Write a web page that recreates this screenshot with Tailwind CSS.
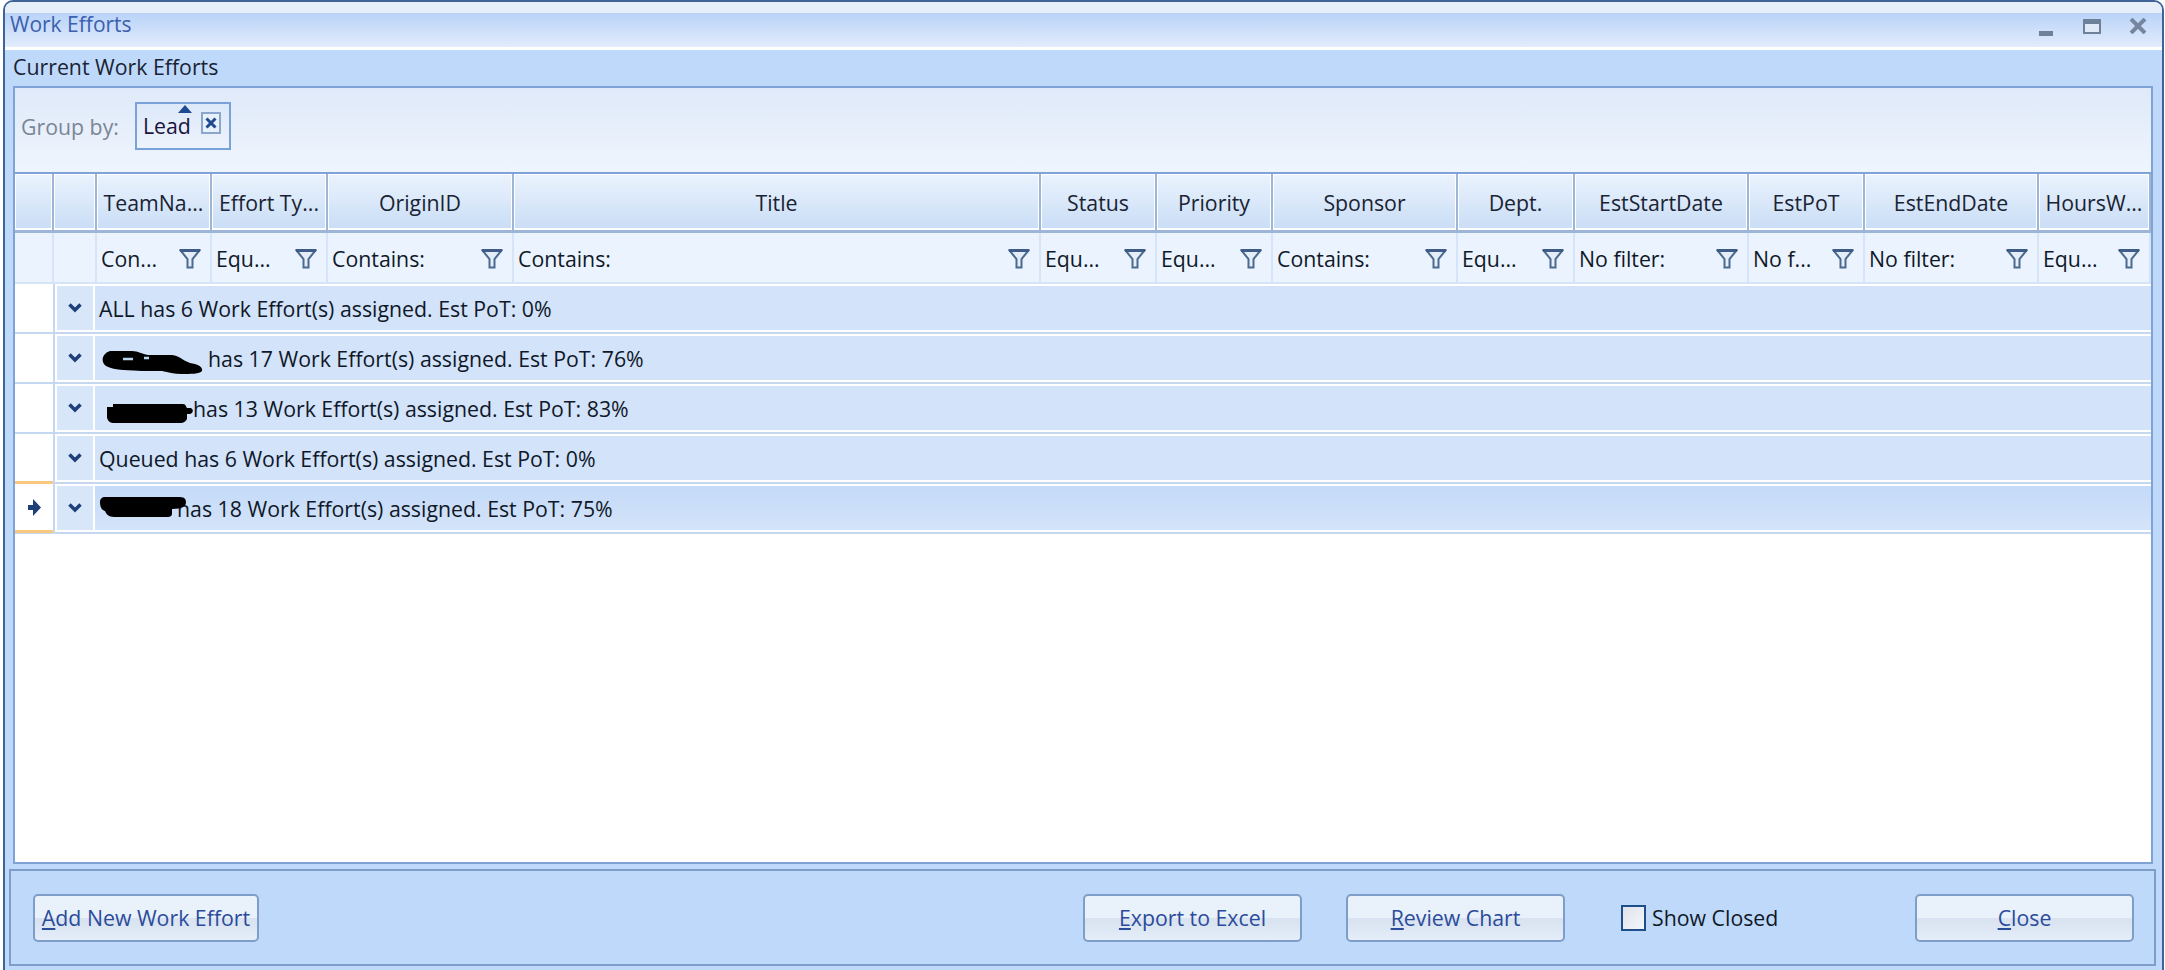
<!DOCTYPE html>
<html><head><meta charset="utf-8"><script src="https://cdn.jsdelivr.net/npm/@tailwindcss/browser@4"></script></head>
<body class="m-0 bg-white">
<div class="w-[2165px] h-[970px] overflow-hidden bg-white font-['Open_Sans',sans-serif] text-[21.3px] text-[#101828]">
<div class="ml-[3px] w-[2161px] h-[970px] flex flex-col border-l-[2px] border-r-[2px] border-t-[2px] border-[#3f6396] rounded-t-[10px] bg-[#bfd9fb] overflow-hidden">
  <!-- Title bar -->
  <div class="h-[48px] shrink-0 border-b-[3px] border-white bg-[linear-gradient(#e6eefa_0,#e6eefa_24%,#b9d3f8_25%,#e2ecfb_100%)] flex items-start pl-[5px] pr-[15px]">
    <span class="self-center text-[#3c5fae] text-[21px] mt-[1px]">Work Efforts</span>
    <span class="ml-auto mt-[29px] w-[14px] h-[5px] bg-[#6f8099]"></span>
    <span class="ml-[30px] mt-[17px] w-[18px] h-[15px] border-[2px] border-t-[5px] border-[#6f8099] bg-[#dfe9f8]"></span>
    <svg class="ml-[28px] mt-[16px]" width="18" height="16" viewBox="0 0 18 16"><path d="M2 1 L16 15 M16 1 L2 15" stroke="#75869e" stroke-width="4"/></svg>
  </div>
  <!-- Body -->
  <div class="flex-1 flex flex-col min-h-0">
    <div class="h-[36px] shrink-0 pl-[8px] pb-[2px] flex items-center text-[#1a2333]">Current Work Efforts</div>
    <!-- Grid outer -->
    <div class="ml-[8px] w-[2140px] h-[778px] shrink-0 border-[2px] border-[#7fa3d6] bg-white flex flex-col">
      <!-- group panel -->
      <div class="h-[84px] shrink-0 bg-[linear-gradient(#dfe9f9,#eff5fd)] flex items-center pl-[6px] pb-[6px]">
        <span class="text-[#7b8594]">Group by:</span>
        <div class="ml-[16px] mt-[-2px] relative w-[96px] h-[48px] border-[2px] border-[#7aa2da] bg-[linear-gradient(#dde8f8,#edf3fc)] flex items-center pl-[6px] text-[#1a1440]">
          Lead
          <svg class="absolute left-[41px] top-[1px]" width="14" height="8" viewBox="0 0 14 8"><path d="M7 0 L14 8 L0 8Z" fill="#1e4a92"/></svg>
          <span class="absolute left-[64px] top-[8px] w-[20px] h-[22px] border-[2px] border-[#8ba6cd] bg-[#e8f0fb] flex items-center justify-center">
            <svg width="12" height="12" viewBox="0 0 12 12"><path d="M1.5 1.5 L10.5 10.5 M10.5 1.5 L1.5 10.5" stroke="#1e4a92" stroke-width="3"/></svg>
          </span>
        </div>
      </div>
      <!-- header -->
      <div class="flex h-[61px] shrink-0 border-t-[2px] border-b-[3px] border-t-[#7fa3d6] border-b-[#9db5d6] text-center text-[#1a2333] [&>div]:shadow-[inset_1px_1px_0_white,inset_-1px_-2px_0_white] [&>div]:flex [&>div]:items-center [&>div]:justify-center [&>div]:whitespace-nowrap [&>div]:overflow-hidden [&>div]:border-r-2 [&>div]:border-r-[#9db5d6] [&>div]:pt-[2px] [&>div]:bg-[linear-gradient(#eaf3fd,#c9ddf6)]">
        <div class="w-[39px]"></div>
        <div class="w-[43px]"></div>
        <div class="w-[115px]">TeamNa...</div>
        <div class="w-[116px]">Effort Ty...</div>
        <div class="w-[186px]">OriginID</div>
        <div class="w-[527px]">Title</div>
        <div class="w-[116px]">Status</div>
        <div class="w-[116px]">Priority</div>
        <div class="w-[185px]">Sponsor</div>
        <div class="w-[117px]">Dept.</div>
        <div class="w-[174px]">EstStartDate</div>
        <div class="w-[116px]">EstPoT</div>
        <div class="w-[174px]">EstEndDate</div>
        <div class="w-[112px]">HoursW...</div>
      </div>
      <!-- filter row -->
      <div class="flex h-[51px] shrink-0 border-b-[2px] border-[#d5e4f7] bg-[#ebf4fe] [&>div]:border-r-2 [&>div]:border-[#d5e4f7] [&>div]:flex [&>div]:items-center [&>div]:justify-between [&>div]:pl-[4px] [&>div]:pr-[9px] [&>div]:pt-[2px] [&>div]:whitespace-nowrap">
        <div class="w-[39px]"></div>
        <div class="w-[43px]"></div>
        <div class="w-[115px]"><span>Con...</span><svg width="22" height="20" viewBox="0 0 22 20"><path d="M1.5 1.5 H20.5 L13.5 10 V18.5 H8.5 V10 Z" fill="#e4edf8" stroke="#4a6a90" stroke-width="2"/><path d="M1 1.5 H21" stroke="#3e5c86" stroke-width="3"/></svg></div>
        <div class="w-[116px]"><span>Equ...</span><svg width="22" height="20" viewBox="0 0 22 20"><path d="M1.5 1.5 H20.5 L13.5 10 V18.5 H8.5 V10 Z" fill="#e4edf8" stroke="#4a6a90" stroke-width="2"/><path d="M1 1.5 H21" stroke="#3e5c86" stroke-width="3"/></svg></div>
        <div class="w-[186px]"><span>Contains:</span><svg width="22" height="20" viewBox="0 0 22 20"><path d="M1.5 1.5 H20.5 L13.5 10 V18.5 H8.5 V10 Z" fill="#e4edf8" stroke="#4a6a90" stroke-width="2"/><path d="M1 1.5 H21" stroke="#3e5c86" stroke-width="3"/></svg></div>
        <div class="w-[527px]"><span>Contains:</span><svg width="22" height="20" viewBox="0 0 22 20"><path d="M1.5 1.5 H20.5 L13.5 10 V18.5 H8.5 V10 Z" fill="#e4edf8" stroke="#4a6a90" stroke-width="2"/><path d="M1 1.5 H21" stroke="#3e5c86" stroke-width="3"/></svg></div>
        <div class="w-[116px]"><span>Equ...</span><svg width="22" height="20" viewBox="0 0 22 20"><path d="M1.5 1.5 H20.5 L13.5 10 V18.5 H8.5 V10 Z" fill="#e4edf8" stroke="#4a6a90" stroke-width="2"/><path d="M1 1.5 H21" stroke="#3e5c86" stroke-width="3"/></svg></div>
        <div class="w-[116px]"><span>Equ...</span><svg width="22" height="20" viewBox="0 0 22 20"><path d="M1.5 1.5 H20.5 L13.5 10 V18.5 H8.5 V10 Z" fill="#e4edf8" stroke="#4a6a90" stroke-width="2"/><path d="M1 1.5 H21" stroke="#3e5c86" stroke-width="3"/></svg></div>
        <div class="w-[185px]"><span>Contains:</span><svg width="22" height="20" viewBox="0 0 22 20"><path d="M1.5 1.5 H20.5 L13.5 10 V18.5 H8.5 V10 Z" fill="#e4edf8" stroke="#4a6a90" stroke-width="2"/><path d="M1 1.5 H21" stroke="#3e5c86" stroke-width="3"/></svg></div>
        <div class="w-[117px]"><span>Equ...</span><svg width="22" height="20" viewBox="0 0 22 20"><path d="M1.5 1.5 H20.5 L13.5 10 V18.5 H8.5 V10 Z" fill="#e4edf8" stroke="#4a6a90" stroke-width="2"/><path d="M1 1.5 H21" stroke="#3e5c86" stroke-width="3"/></svg></div>
        <div class="w-[174px]"><span>No filter:</span><svg width="22" height="20" viewBox="0 0 22 20"><path d="M1.5 1.5 H20.5 L13.5 10 V18.5 H8.5 V10 Z" fill="#e4edf8" stroke="#4a6a90" stroke-width="2"/><path d="M1 1.5 H21" stroke="#3e5c86" stroke-width="3"/></svg></div>
        <div class="w-[116px]"><span>No f...</span><svg width="22" height="20" viewBox="0 0 22 20"><path d="M1.5 1.5 H20.5 L13.5 10 V18.5 H8.5 V10 Z" fill="#e4edf8" stroke="#4a6a90" stroke-width="2"/><path d="M1 1.5 H21" stroke="#3e5c86" stroke-width="3"/></svg></div>
        <div class="w-[174px]"><span>No filter:</span><svg width="22" height="20" viewBox="0 0 22 20"><path d="M1.5 1.5 H20.5 L13.5 10 V18.5 H8.5 V10 Z" fill="#e4edf8" stroke="#4a6a90" stroke-width="2"/><path d="M1 1.5 H21" stroke="#3e5c86" stroke-width="3"/></svg></div>
        <div class="w-[112px]"><span>Equ...</span><svg width="22" height="20" viewBox="0 0 22 20"><path d="M1.5 1.5 H20.5 L13.5 10 V18.5 H8.5 V10 Z" fill="#e4edf8" stroke="#4a6a90" stroke-width="2"/><path d="M1 1.5 H21" stroke="#3e5c86" stroke-width="3"/></svg></div>
      </div>
      <!-- rows -->
      <div class="flex h-[50px] shrink-0 border-b-[2px] border-[#c6d8ef]">
        <div class="w-[40px] border-r-2 border-[#c6d8ef]"></div>
        <div class="my-[2px] ml-[2px] w-[36px] bg-[#d8e6f9] flex items-center justify-center"><svg width="14" height="10" viewBox="0 0 14 10"><path d="M1.5 1.5 L7 7 L12.5 1.5" fill="none" stroke="#1e3f78" stroke-width="3.5"/></svg></div>
        <div class="my-[2px] ml-[2px] flex-1 bg-[#d2e3fa] flex items-center pl-[4px] pt-[2px]">ALL has 6 Work Effort(s) assigned. Est PoT: 0%</div>
      </div>
      <div class="flex h-[50px] shrink-0 border-b-[2px] border-[#c6d8ef]">
        <div class="w-[40px] border-r-2 border-[#c6d8ef]"></div>
        <div class="my-[2px] ml-[2px] w-[36px] bg-[#d8e6f9] flex items-center justify-center"><svg width="14" height="10" viewBox="0 0 14 10"><path d="M1.5 1.5 L7 7 L12.5 1.5" fill="none" stroke="#1e3f78" stroke-width="3.5"/></svg></div>
        <div class="relative my-[2px] ml-[2px] flex-1 bg-[#d2e3fa] flex items-center pl-[113px] pt-[2px]">has 17 Work Effort(s) assigned. Est PoT: 76%
          <svg class="absolute left-[7px] top-[15px]" width="101" height="23" viewBox="0 0 101 23"><path d="M8 0 H30 C36 0 40 3 46 4 H70 C78 5 80 9 88 12 C96 13 101 16 100 20 C98 23 88 23 80 23 C72 23 66 21 60 20 H40 C30 19 12 20 4 15 C-1 12 -1 3 8 0Z" fill="#000"/><path d="M21 8 H31 M42 7 H47" stroke="#b9d3f0" stroke-width="2.5"/></svg>
        </div>
      </div>
      <div class="flex h-[50px] shrink-0 border-b-[2px] border-[#c6d8ef]">
        <div class="w-[40px] border-r-2 border-[#c6d8ef]"></div>
        <div class="my-[2px] ml-[2px] w-[36px] bg-[#d8e6f9] flex items-center justify-center"><svg width="14" height="10" viewBox="0 0 14 10"><path d="M1.5 1.5 L7 7 L12.5 1.5" fill="none" stroke="#1e3f78" stroke-width="3.5"/></svg></div>
        <div class="relative my-[2px] ml-[2px] flex-1 bg-[#d2e3fa] flex items-center pl-[98px] pt-[2px]">has 13 Work Effort(s) assigned. Est PoT: 83%
          <svg class="absolute left-[12px] top-[18px]" width="86" height="19" viewBox="0 0 86 19"><path d="M0 3 H6 V0 H76 C79 0 79 3 80 4 H84 C87 6 86 9 83 10 H80 V15 C78 19 75 19 72 19 H6 C3 19 0 16 0 13Z" fill="#000"/></svg>
        </div>
      </div>
      <div class="flex h-[50px] shrink-0 border-b-[2px] border-[#c6d8ef]">
        <div class="w-[40px] border-r-2 border-[#c6d8ef]"></div>
        <div class="my-[2px] ml-[2px] w-[36px] bg-[#d8e6f9] flex items-center justify-center"><svg width="14" height="10" viewBox="0 0 14 10"><path d="M1.5 1.5 L7 7 L12.5 1.5" fill="none" stroke="#1e3f78" stroke-width="3.5"/></svg></div>
        <div class="my-[2px] ml-[2px] flex-1 bg-[#d2e3fa] flex items-center pl-[4px] pt-[2px]">Queued has 6 Work Effort(s) assigned. Est PoT: 0%</div>
      </div>
      <div class="relative flex h-[50px] shrink-0 border-b-[2px] border-[#c6d8ef]">
        <div class="w-[40px] border-r-2 border-[#c6d8ef]"></div>
        <div class="absolute left-0 top-[-3px] w-[38px] h-[52px] border-y-[3px] border-t-[#f9c87f] border-b-[#f9c87f] flex items-center justify-center bg-white">
          <svg width="13" height="17" viewBox="0 0 13 17"><path d="M0 6 H5 V0 L13 8.5 L5 17 V11 H0Z" fill="#1e3f78"/></svg>
        </div>
        <div class="my-[2px] ml-[2px] w-[36px] bg-[#d8e6f9] flex items-center justify-center"><svg width="14" height="10" viewBox="0 0 14 10"><path d="M1.5 1.5 L7 7 L12.5 1.5" fill="none" stroke="#1e3f78" stroke-width="3.5"/></svg></div>
        <div class="relative my-[2px] ml-[2px] flex-1 bg-[linear-gradient(#c4daf8,#d4e4fa)] flex items-center pl-[82px] pt-[2px]">has 18 Work Effort(s) assigned. Est PoT: 75%
          <svg class="absolute left-[5px] top-[11px]" width="86" height="20" viewBox="0 0 86 20"><path d="M5 0 H80 C85 0 86 3 86 5 C86 9 83 12 72 12 V17 C72 19 70 20 68 20 H14 C9 20 6 17 5 14 C1 13 0 9 0 5 C0 2 2 0 5 0Z" fill="#000"/></svg>
        </div>
      </div>
      <div class="flex-1 bg-white"></div>
    </div>
    <!-- Footer -->
    <div class="mt-[5px] ml-[4px] w-[2147px] h-[97px] shrink-0 border-[2px] border-[#7f9dc9] flex items-center pl-[22px] text-[#2b4b9b]">
      <button class="w-[226px] h-[48px] rounded-[5px] border-[2px] border-[#7f9dc9] bg-[linear-gradient(#e9f1fb_50%,#d8e2f0_50%,#e4edf9)] text-center whitespace-nowrap"><u>A</u>dd New Work Effort</button>
      <button class="ml-[824px] w-[219px] h-[48px] rounded-[5px] border-[2px] border-[#7f9dc9] bg-[linear-gradient(#e9f1fb_50%,#d8e2f0_50%,#e4edf9)] text-center"><u>E</u>xport to Excel</button>
      <button class="ml-[44px] w-[219px] h-[48px] rounded-[5px] border-[2px] border-[#7f9dc9] bg-[linear-gradient(#e9f1fb_50%,#d8e2f0_50%,#e4edf9)] text-center"><u>R</u>eview Chart</button>
      <span class="ml-[56px] w-[25px] h-[26px] border-[2px] border-[#1e4f8a] bg-[linear-gradient(135deg,#dfe3ea,#f4f6fa)]"></span>
      <span class="ml-[6px] text-[#101828] w-[263px] whitespace-nowrap">Show Closed</span>
      <button class="w-[219px] h-[48px] rounded-[5px] border-[2px] border-[#7f9dc9] bg-[linear-gradient(#e9f1fb_50%,#d8e2f0_50%,#e4edf9)] text-center"><u>C</u>lose</button>
    </div>
  </div>
</div>
</div>
</body></html>
